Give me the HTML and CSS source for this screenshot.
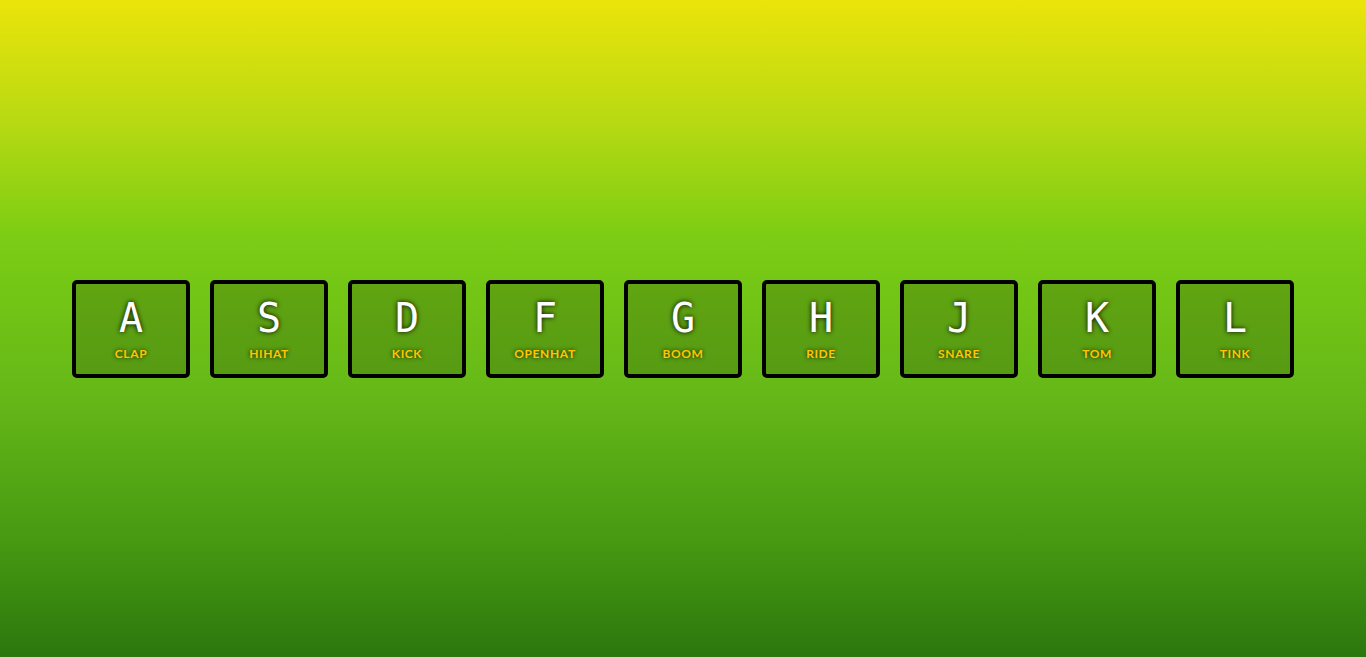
FILE: index.html
```
<!DOCTYPE html>
<html>
<head>
<meta charset="utf-8">
<link rel="stylesheet" href="styles.css">
</head>
<body>
<div class="keys">
  <div class="key"><kbd>A</kbd><span class="sound">clap</span></div>
  <div class="key"><kbd>S</kbd><span class="sound">hihat</span></div>
  <div class="key"><kbd>D</kbd><span class="sound">kick</span></div>
  <div class="key"><kbd>F</kbd><span class="sound">openhat</span></div>
  <div class="key"><kbd>G</kbd><span class="sound">boom</span></div>
  <div class="key"><kbd>H</kbd><span class="sound">ride</span></div>
  <div class="key"><kbd>J</kbd><span class="sound">snare</span></div>
  <div class="key"><kbd>K</kbd><span class="sound">tom</span></div>
  <div class="key"><kbd>L</kbd><span class="sound">tink</span></div>
</div>
</body>
</html>
```
FILE: styles.css
```
html, body {
  margin: 0;
  height: 100%;
}
body {
  background: linear-gradient(to bottom, #ebe40a 0%, #b9da12 18%, #7bcd14 36%, #66b818 60%, #479a12 82%, #2c770e 100%);
  font-family: "Open Sans", "Liberation Sans", sans-serif;
}
.keys {
  height: 100%;
  display: flex;
  align-items: center;
  justify-content: center;
  gap: 20px;
}
.key {
  box-sizing: border-box;
  width: 118px;
  height: 98px;
  border: 4px solid #000;
  border-radius: 5px;
  padding: 10px 5px;
  text-align: center;
  color: #fff;
  background: rgba(0, 0, 0, 0.17);
  text-shadow: 0 0 5px #000;
}
kbd {
  display: block;
  font-family: "DejaVu Sans Mono", monospace;
  font-size: 40px;
  line-height: 49px;
}
.sound {
  display: block;
  font-family: "Lato", "Open Sans", sans-serif;
  font-size: 12px;
  line-height: 21px;
  font-weight: 700;
  text-transform: uppercase;
  letter-spacing: 0.6px;
  color: #ffc600;
  text-shadow: 0 0 4px rgba(0, 0, 0, 0.8);
}
```
